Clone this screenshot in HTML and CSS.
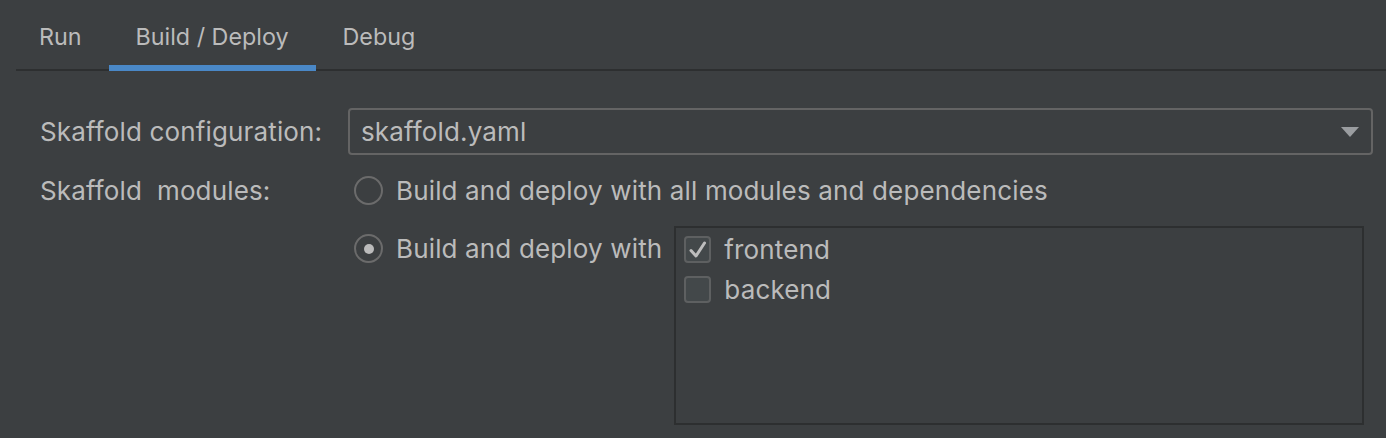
FILE: index.html
```html
<!DOCTYPE html>
<html>
<head>
<meta charset="utf-8">
<link rel="stylesheet" href="styles.css">
</head>
<body>
<div class="tabs">
  <div class="tab first">Run</div>
  <div class="tab active">Build / Deploy</div>
  <div class="tab">Debug</div>
</div>
<div class="form">
  <div class="label l1">Skaffold configuration:</div>
  <div class="combo">
    <span class="combo-text">skaffold.yaml</span>
    <svg class="arrow" width="18" height="10" viewBox="0 0 18 10"><path d="M0 0H18L9 10Z" fill="#9a9da0"/></svg>
  </div>
  <div class="label l2">Skaffold&nbsp; modules:</div>
  <div class="options">
    <div class="radio-row">
      <span class="radio"></span>
      <span class="rtext">Build and deploy with all modules and dependencies</span>
    </div>
    <div class="radio-row second">
      <span class="radio checked"></span>
      <span class="rtext">Build and deploy with</span>
      <div class="list">
        <div class="item">
          <span class="cb">
            <svg width="27" height="27" viewBox="0 0 27 27"><path d="M7 14.5L12 20L20.5 7" fill="none" stroke="#bdbdbd" stroke-width="3" stroke-linecap="round" stroke-linejoin="round"/></svg>
          </span>
          <span class="itext">frontend</span>
        </div>
        <div class="item">
          <span class="cb"></span>
          <span class="itext">backend</span>
        </div>
      </div>
    </div>
  </div>
</div>
</body>
</html>
```
FILE: styles.css
```css
html, body {
  margin: 0;
  padding: 0;
  background: #3c3f41;
  height: 438px;
  overflow: hidden;
}
body {
  font-family: Inter, "Noto Sans", sans-serif;
  font-size: 26px;
  letter-spacing: 0.15px;
  color: #bbbbbb;
}
.tabs {
  display: flex;
  margin-left: 16px;
  height: 69px;
  border-bottom: 2px solid #2d2f30;
  font-size: 23.3px;
  letter-spacing: 0;
}
.tab {
  padding: 5px 27px 0;
  display: flex;
  align-items: center;
  height: 69px;
  box-sizing: border-box;
  line-height: 24px;
  position: relative;
}
.tab.first {
  padding-left: 23px;
}
.tab.active::after {
  content: "";
  position: absolute;
  left: 0;
  right: 0;
  bottom: -2px;
  height: 6px;
  background: #4a88c7;
}
.form {
  display: grid;
  grid-template-columns: 308px 1fr;
  padding: 37px 13px 0 40px;
  row-gap: 21px;
}
.label {
  display: flex;
  align-items: center;
}
.l1 { height: 47px; }
.l2 { height: 29px; align-self: start; }
.combo {
  height: 47px;
  box-sizing: border-box;
  border: 2px solid #646464;
  border-radius: 4px;
  display: flex;
  align-items: center;
  justify-content: space-between;
  padding: 0 12px 0 11px;
}
.arrow { display: block; }
.options {
  display: flex;
  flex-direction: column;
  gap: 29px;
  padding-left: 6px;
}
.radio-row {
  display: flex;
  align-items: flex-start;
}
.radio {
  width: 29px;
  height: 29px;
  box-sizing: border-box;
  border: 2px solid #6b6b6b;
  border-radius: 50%;
  background: #3c3f41;
  display: flex;
  align-items: center;
  justify-content: center;
  flex: none;
}
.radio.checked::after {
  content: "";
  width: 10px;
  height: 10px;
  border-radius: 50%;
  background: #bbbbbb;
}
.rtext {
  margin-left: 13px;
  line-height: 29px;
  white-space: nowrap;
}
.second .rtext { margin-right: 12px; }
.list {
  flex: 1;
  height: 199px;
  margin-top: -8px;
  margin-right: 9px;
  box-sizing: border-box;
  border: 2px solid #2d2f30;
  padding: 8px 8px;
  display: flex;
  flex-direction: column;
  gap: 13px;
}
.item {
  display: flex;
  align-items: center;
  height: 27px;
}
.cb {
  width: 27px;
  height: 27px;
  box-sizing: border-box;
  border: 2px solid #5e6061;
  border-radius: 4px;
  background: #43484a;
  flex: none;
  position: relative;
}
.cb svg {
  position: absolute;
  left: -2px;
  top: -2px;
}
.itext { margin-left: 13px; line-height: 27px; }
```
